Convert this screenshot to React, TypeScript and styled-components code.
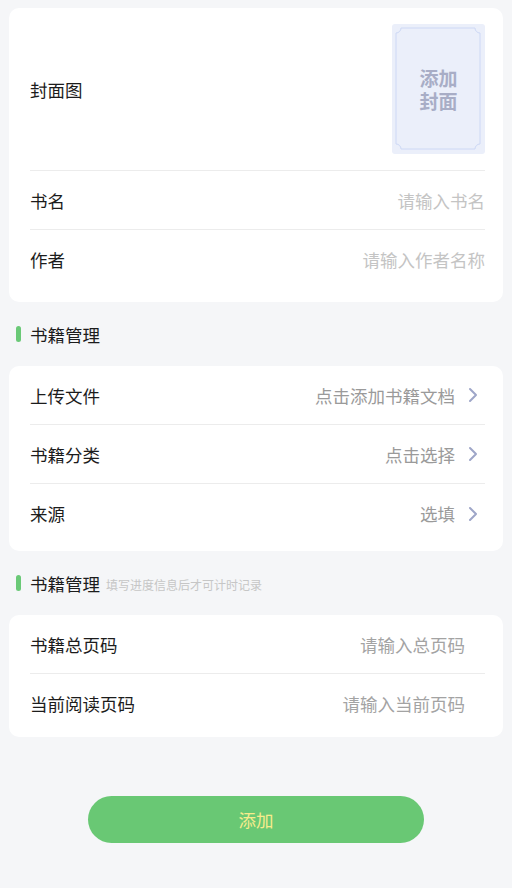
import React from "react";
import styled, { createGlobalStyle } from "styled-components";

const GlobalStyle = createGlobalStyle`
	html, body {
		margin: 0;
		padding: 0;
		background: #f5f6f8;
	}
	body {
		font-family: "Noto Sans CJK SC", "Noto Sans", sans-serif;
		-webkit-font-smoothing: antialiased;
	}
`;

type Item = { label: string; value: string; arrow?: boolean };

const basicRows: Item[] = [
	{ label: "书名", value: "请输入书名" },
	{ label: "作者", value: "请输入作者名称" },
];
const manageRows: Item[] = [
	{ label: "上传文件", value: "点击添加书籍文档", arrow: true },
	{ label: "书籍分类", value: "点击选择", arrow: true },
	{ label: "来源", value: "选填", arrow: true },
];
const progressRows: Item[] = [
	{ label: "书籍总页码", value: "请输入总页码" },
	{ label: "当前阅读页码", value: "请输入当前页码" },
];

const Chevron = () => (
	<svg width="12" height="16" viewBox="0 0 12 16">
		<polyline
			points="3,2 9,8 3,14"
			fill="none"
			stroke="#9ea6c8"
			strokeWidth="2"
			strokeLinecap="round"
			strokeLinejoin="round"
		/>
	</svg>
);

const CoverFrame = () => (
	<svg width="93" height="130" viewBox="0 0 93 130">
		<rect x="0" y="0" width="93" height="130" rx="3" fill="#ebeffa" />
		<path
			d="M9 4 H83 A5 5 0 0 0 88 9 V120 A5 5 0 0 0 83 125 H9 A5 5 0 0 0 4 120 V9 A5 5 0 0 0 9 4 Z"
			fill="none"
			stroke="#cdd8f5"
			strokeWidth="1"
		/>
	</svg>
);

function Rows({ items, tone, padRight }: { items: Item[]; tone: string; padRight?: boolean }) {
	return (
		<>
			{items.map((it) => (
				<Row key={it.label}>
					<Label>{it.label}</Label>
					<Value tone={tone} padRight={padRight}>
						{it.value}
						{it.arrow && (
							<ArrowWrap>
								<Chevron />
							</ArrowWrap>
						)}
					</Value>
				</Row>
			))}
		</>
	);
}

export default function App() {
	return (
		<>
			<GlobalStyle />
			<Page>
				<Card pb={13}>
					<CoverRow>
						<Label>封面图</Label>
						<Cover>
							<CoverFrame />
							<CoverText>
								<CoverLine>添加</CoverLine>
								<CoverLine>封面</CoverLine>
							</CoverText>
						</Cover>
					</CoverRow>
					<Rows items={basicRows} tone="#c4c4c4" />
				</Card>

				<SectionHead>
					<Bar />
					<SectionTitle>书籍管理</SectionTitle>
				</SectionHead>

				<Card pb={8}>
					<Rows items={manageRows} tone="#9a9a9a" />
				</Card>

				<SectionHead>
					<Bar />
					<SectionTitle>书籍管理</SectionTitle>
					<SectionHint>填写进度信息后才可计时记录</SectionHint>
				</SectionHead>

				<Card pb={4}>
					<Rows items={progressRows} tone="#a3a3a3" padRight />
				</Card>

				<Footer>
					<AddButton>添加</AddButton>
				</Footer>
			</Page>
		</>
	);
}

const Page = styled.div`
	width: 512px;
	min-height: 888px;
	box-sizing: border-box;
	padding: 8px 9px 0;
	background: #f5f6f8;
`;
const Card = styled.div<{ pb: number }>`
	background: #fff;
	border-radius: 10px;
	padding: 0 18px ${(p) => p.pb}px 21px;
`;
const CoverRow = styled.div`
	display: flex;
	align-items: center;
	justify-content: space-between;
	padding: 16px 0 16px;
	border-bottom: 1px solid #ececec;
`;
const Cover = styled.div`
	position: relative;
	width: 93px;
	height: 130px;
	svg {
		display: block;
	}
`;
const CoverText = styled.div`
	position: absolute;
	inset: 0;
	display: flex;
	flex-direction: column;
	align-items: center;
	justify-content: center;
`;
const CoverLine = styled.span`
	font-size: 19px;
	line-height: 23px;
	font-weight: 700;
	color: #a8adc6;
`;
const Row = styled.div`
	display: flex;
	align-items: center;
	justify-content: space-between;
	height: 59px;
	box-sizing: border-box;
	border-bottom: 1px solid #ececec;
	&:last-child {
		border-bottom: none;
	}
`;
const Label = styled.div`
	font-size: 17.5px;
	color: #1c1c1c;
`;
const Value = styled.div<{ tone: string; padRight?: boolean }>`
	display: flex;
	align-items: center;
	font-size: 17.5px;
	color: ${(p) => p.tone};
	padding-right: ${(p) => (p.padRight ? "20px" : "0")};
`;
const ArrowWrap = styled.span`
	display: flex;
	margin-left: 12px;
	margin-right: 6px;
`;
const SectionHead = styled.div`
	display: flex;
	align-items: center;
	height: 64px;
	padding-left: 7px;
	box-sizing: border-box;
`;
const Bar = styled.span`
	width: 5px;
	height: 16px;
	border-radius: 3px;
	background: #6ac977;
	margin-right: 9px;
`;
const SectionTitle = styled.span`
	font-size: 17.5px;
	color: #1c1c1c;
`;
const SectionHint = styled.span`
	font-size: 12px;
	color: #c6c6c6;
	margin-left: 6px;
	margin-top: 2px;
`;
const Footer = styled.div`
	display: flex;
	justify-content: center;
	padding-top: 59px;
`;
const AddButton = styled.button`
	width: 336px;
	height: 47px;
	border: none;
	border-radius: 24px;
	background: #69c874;
	color: #f7ec8c;
	font-family: "Noto Sans CJK SC", "Noto Sans", sans-serif;
	font-size: 17.5px;
	cursor: pointer;
`;
